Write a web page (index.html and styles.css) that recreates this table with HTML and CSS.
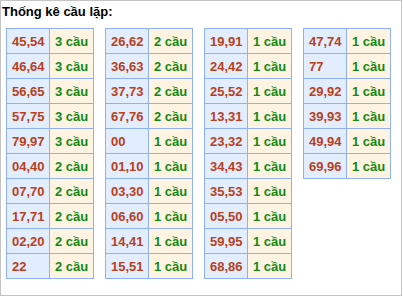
FILE: index.html
```html
<!DOCTYPE html>
<html>
<head>
<meta charset="utf-8">
<link rel="stylesheet" href="styles.css">
</head>
<body>
<div class="box">
  <div class="title">Thống kê cầu lặp:</div>
  <div class="tables">
    <table class="tk">
      <tr><td class="num">45,54</td><td class="cnt">3 cầu</td></tr>
      <tr><td class="num">46,64</td><td class="cnt">3 cầu</td></tr>
      <tr><td class="num">56,65</td><td class="cnt">3 cầu</td></tr>
      <tr><td class="num">57,75</td><td class="cnt">3 cầu</td></tr>
      <tr><td class="num">79,97</td><td class="cnt">3 cầu</td></tr>
      <tr><td class="num">04,40</td><td class="cnt">2 cầu</td></tr>
      <tr><td class="num">07,70</td><td class="cnt">2 cầu</td></tr>
      <tr><td class="num">17,71</td><td class="cnt">2 cầu</td></tr>
      <tr><td class="num">02,20</td><td class="cnt">2 cầu</td></tr>
      <tr><td class="num">22</td><td class="cnt">2 cầu</td></tr>
    </table>
    <table class="tk">
      <tr><td class="num">26,62</td><td class="cnt">2 cầu</td></tr>
      <tr><td class="num">36,63</td><td class="cnt">2 cầu</td></tr>
      <tr><td class="num">37,73</td><td class="cnt">2 cầu</td></tr>
      <tr><td class="num">67,76</td><td class="cnt">2 cầu</td></tr>
      <tr><td class="num">00</td><td class="cnt">1 cầu</td></tr>
      <tr><td class="num">01,10</td><td class="cnt">1 cầu</td></tr>
      <tr><td class="num">03,30</td><td class="cnt">1 cầu</td></tr>
      <tr><td class="num">06,60</td><td class="cnt">1 cầu</td></tr>
      <tr><td class="num">14,41</td><td class="cnt">1 cầu</td></tr>
      <tr><td class="num">15,51</td><td class="cnt">1 cầu</td></tr>
    </table>
    <table class="tk">
      <tr><td class="num">19,91</td><td class="cnt">1 cầu</td></tr>
      <tr><td class="num">24,42</td><td class="cnt">1 cầu</td></tr>
      <tr><td class="num">25,52</td><td class="cnt">1 cầu</td></tr>
      <tr><td class="num">13,31</td><td class="cnt">1 cầu</td></tr>
      <tr><td class="num">23,32</td><td class="cnt">1 cầu</td></tr>
      <tr><td class="num">34,43</td><td class="cnt">1 cầu</td></tr>
      <tr><td class="num">35,53</td><td class="cnt">1 cầu</td></tr>
      <tr><td class="num">05,50</td><td class="cnt">1 cầu</td></tr>
      <tr><td class="num">59,95</td><td class="cnt">1 cầu</td></tr>
      <tr><td class="num">68,86</td><td class="cnt">1 cầu</td></tr>
    </table>
    <table class="tk">
      <tr><td class="num">47,74</td><td class="cnt">1 cầu</td></tr>
      <tr><td class="num">77</td><td class="cnt">1 cầu</td></tr>
      <tr><td class="num">29,92</td><td class="cnt">1 cầu</td></tr>
      <tr><td class="num">39,93</td><td class="cnt">1 cầu</td></tr>
      <tr><td class="num">49,94</td><td class="cnt">1 cầu</td></tr>
      <tr><td class="num">69,96</td><td class="cnt">1 cầu</td></tr>
    </table>
  </div>
</div>
</body>
</html>
```
FILE: styles.css
```css
html, body {
  margin: 0;
  padding: 0;
  background: #ffffff;
}
.box {
  box-sizing: border-box;
  width: 402px;
  height: 296px;
  border: 1px solid #c4c4c4;
  padding: 3px 5px 0 5px;
  font-family: "Liberation Sans", Arial, sans-serif;
}
.title {
  font-size: 13px;
  font-weight: bold;
  line-height: 16px;
  color: #000;
  margin: 0 0 8px -4px;
}
.tables {
  display: flex;
  align-items: flex-start;
  gap: 11px;
}
.tk {
  border-collapse: collapse;
  table-layout: fixed;
  width: 88px;
}
.tk td {
  border: 1px solid #8fb1f2;
  height: 25px;
  padding: 0 0 0 5px;
  font-size: 13px;
  font-weight: bold;
  line-height: 15px;
  white-space: nowrap;
  box-sizing: border-box;
  overflow: hidden;
}
.num {
  width: 43px;
  background: #e2edfe;
  color: #b8401c;
}
.cnt {
  width: 44px;
  background: #fff4e1;
  color: #118a11;
  padding-left: 6px;
}
```
